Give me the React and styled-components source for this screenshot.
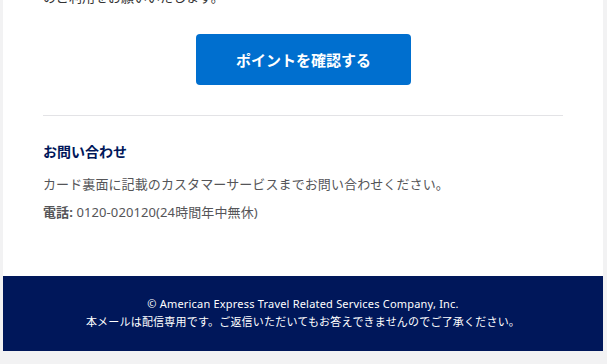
import React from "react";
import styled, { createGlobalStyle } from "styled-components";

const Global = createGlobalStyle`
  html, body {
    margin: 0;
    padding: 0;
    background: #f2f2f3;
    overflow: hidden;
  }
  body {
    font-family: "Noto Sans", "Noto Sans CJK JP", sans-serif;
  }
`;

const Page = styled.div`
  width: 607px;
  height: 364px;
  box-sizing: border-box;
  padding-left: 3px;
  background: #f2f2f3;
  overflow: hidden;
`;

const Card = styled.div`
  width: 600px;
  background: #ffffff;
`;

const Content = styled.div`
  padding: 0 40px 54px 40px;
`;

const Lead = styled.p`
  margin: -13px 0 0;
  font-size: 13px;
  line-height: 20px;
  color: #333;
`;

const ButtonRow = styled.div`
  display: flex;
  justify-content: center;
  margin-top: 27px;
`;

const CtaButton = styled.a`
  display: flex;
  align-items: center;
  justify-content: center;
  width: 215px;
  height: 51px;
  margin-left: 1px;
  border-radius: 4px;
  background: #006fcf;
  color: #ffffff;
  font-size: 15px;
  font-weight: 700;
  text-decoration: none;
`;

const Divider = styled.hr`
  border: 0;
  height: 1px;
  background: #e3e3e6;
  margin: 30px 0 0;
`;

const Heading = styled.h3`
  margin: 25px 0 0;
  font-size: 14px;
  line-height: 22px;
  font-weight: 700;
  color: #00175a;
`;

const Text = styled.p`
  margin: ${(p) => p.$gap}px 0 0;
  font-size: 13px;
  line-height: 20px;
  color: #555558;
  letter-spacing: 0.1px;
`;

const Label = styled.strong`
  font-weight: 700;
  color: #555558;
`;

const Footer = styled.footer`
  width: 600px;
  background: #00175a;
  color: #ffffff;
  text-align: center;
  font-size: 11px;
  line-height: 18px;
  padding: 19px 0 20px;
  letter-spacing: 0.2px;
`;

const FooterLine = styled.div`
  white-space: nowrap;
`;

export default function App() {
  return (
    <>
      <Global />
      <Page>
        <Card>
          <Content>
            <Lead>のご利用をお願いいたします。</Lead>
            <ButtonRow>
              <CtaButton href="#">ポイントを確認する</CtaButton>
            </ButtonRow>
            <Divider />
            <Heading>お問い合わせ</Heading>
            <Text $gap={11}>
              カード裏面に記載のカスタマーサービスまでお問い合わせください。
            </Text>
            <Text $gap={8}>
              <Label>電話:</Label> 0120-020120(24時間年中無休)
            </Text>
          </Content>
          <Footer>
            <FooterLine>
              © American Express Travel Related Services Company, Inc.
            </FooterLine>
            <FooterLine>
              本メールは配信専用です。ご返信いただいてもお答えできませんのでご了承ください。
            </FooterLine>
          </Footer>
        </Card>
      </Page>
    </>
  );
}
